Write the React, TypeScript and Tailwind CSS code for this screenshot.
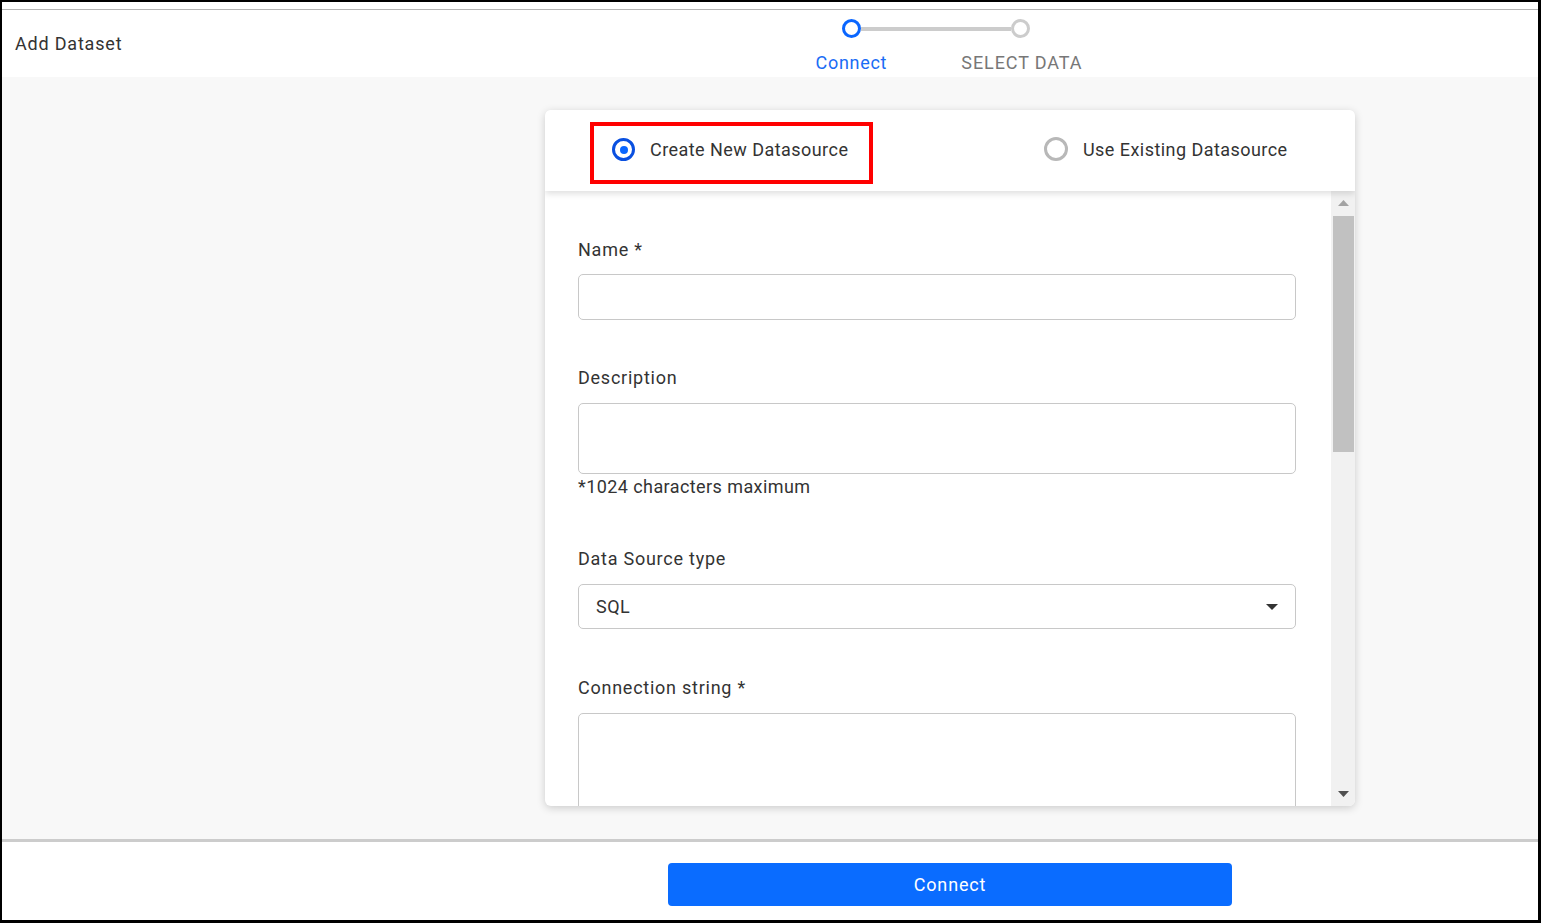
import React from 'react'

const font = { fontFamily: 'Roboto, "Liberation Sans", sans-serif' }

function Label({ children, className = '' }: { children: React.ReactNode; className?: string }) {
  return <div className={`text-[18px] leading-[21px] tracking-[0.75px] text-[#333] ${className}`}>{children}</div>
}

function Field({ h, className = '', children }: { h: string; className?: string; children?: React.ReactNode }) {
  return (
    <div className={`w-[718px] ${h} rounded-[5px] border border-[#c8c8c8] bg-white ${className}`}>{children}</div>
  )
}

export default function App() {
  return (
    <div
      style={font}
      className="w-[1541px] h-[923px] flex flex-col border-t-2 border-l-2 border-r-[3px] border-b-[3px] border-black bg-white overflow-hidden"
    >
      {/* header */}
      <div className="h-[75px] bg-white flex flex-col">
        <div className="h-[7px]" />
        <div className="h-px bg-[#b4b4b4]" />
        <div className="flex-1 flex">
          <div className="pl-[13px] pt-[23px] text-[18px] leading-[21px] tracking-[0.8px] text-[#333]">Add Dataset</div>
          <div className="ml-[680px] pt-[9px] flex flex-col">
            <div className="flex items-center pl-[40px]">
              <div className="w-[19px] h-[19px] rounded-full border-[3px] border-[#0a66ff] bg-white" />
              <div className="w-[150px] h-[4px] bg-[#cccccc]" />
              <div className="w-[19px] h-[19px] rounded-full border-[3px] border-[#cccccc] bg-white" />
            </div>
            <div className="flex mt-[14px] text-[18px] leading-[21px]">
              <div className="ml-[9px] w-[80px] text-center text-[#1a6cf5] tracking-[0.7px]">Connect</div>
              <div className="ml-[70px] text-[#777] tracking-[0.9px]">SELECT DATA</div>
            </div>
          </div>
        </div>
      </div>

      {/* body */}
      <div className="flex-1 bg-[#f8f8f8] pt-[33px] pl-[543px]">
        <div className="w-[810px] h-[696px] bg-white rounded-[6px] shadow-[0_2px_8px_rgba(0,0,0,0.18)] flex flex-col overflow-hidden">
          <div className="h-[81px] shrink-0 flex items-start pt-[12px] relative z-10 shadow-[0_3px_6px_rgba(0,0,0,0.12)] bg-white">
            <div className="ml-[45px] w-[283px] h-[62px] border-[4px] border-[#ff0000] flex items-center pl-[18px] pb-[7px]">
              <div className="w-[23px] h-[23px] rounded-full border-[3px] border-[#0a50e0] flex items-center justify-center">
                <div className="w-[8px] h-[8px] rounded-full bg-[#0a66ff]" />
              </div>
              <span className="ml-[15px] text-[18px] tracking-[0.45px] text-[#333]">Create New Datasource</span>
            </div>
            <div className="ml-[171px] mt-[15px] h-[24px] flex items-center">
              <div className="w-[24px] h-[24px] rounded-full border-[3px] border-[#b8b8b8]" />
              <span className="ml-[15px] text-[18px] tracking-[0.45px] text-[#333]">Use Existing Datasource</span>
            </div>
          </div>

          <div className="flex-1 flex overflow-hidden">
            <div className="flex-1 pl-[33px] pt-[48px] overflow-hidden">
              <Label>Name *</Label>
              <Field h="h-[46px]" className="mt-[14px]" />

              <Label className="mt-[47px]">Description</Label>
              <Field h="h-[71px]" className="mt-[15px]" />
              <div className="mt-[2px] text-[18px] leading-[21px] tracking-[0.42px] text-[#333]">*1024 characters maximum</div>

              <Label className="mt-[51px]">Data Source type</Label>
              <Field h="h-[45px]" className="mt-[15px] flex items-center justify-between pl-[17px] pr-[17px]">
                <span className="text-[18px] tracking-[0.5px] text-[#333]">SQL</span>
                <svg width="12" height="6" viewBox="0 0 12 6">
                  <path d="M0 0 L12 0 L6 6 Z" fill="#333" />
                </svg>
              </Field>

              <Label className="mt-[48px]">Connection string *</Label>
              <Field h="h-[120px]" className="mt-[15px]" />
            </div>

            {/* scrollbar */}
            <div className="w-[24px] bg-[#f1f1f1] flex flex-col items-center">
              <svg className="mt-[9px]" width="11" height="6" viewBox="0 0 11 6">
                <path d="M0 6 L5.5 0 L11 6 Z" fill="#a3a3a3" />
              </svg>
              <div className="mt-[10px] w-[21px] h-[236px] bg-[#c1c1c1]" />
              <div className="flex-1" />
              <svg className="mb-[9px]" width="11" height="6" viewBox="0 0 11 6">
                <path d="M0 0 L11 0 L5.5 6 Z" fill="#505050" />
              </svg>
            </div>
          </div>
        </div>
      </div>

      {/* footer */}
      <div className="h-[81px] border-t-[3px] border-[#cccccc] bg-white pl-[666px] pt-[21px]">
        <button className="w-[564px] h-[43px] rounded-[4px] bg-[#0a6cff] text-white text-[18px] tracking-[0.85px]">Connect</button>
      </div>
    </div>
  )
}
